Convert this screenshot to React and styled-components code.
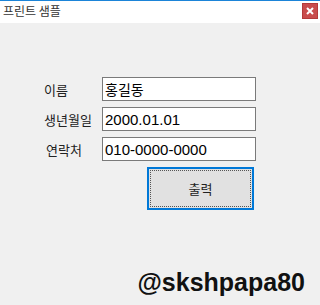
import React from "react";
import styled, { createGlobalStyle } from "styled-components";

const GlobalStyle = createGlobalStyle`
  html, body {
    margin: 0;
    padding: 0;
    background: #f0f0f0;
  }
`;

const Window = styled.div`
  width: 320px;
  height: 305px;
  display: flex;
  flex-direction: column;
  background: #f0f0f0;
  font-family: "Noto Sans CJK KR", "Liberation Sans", sans-serif;
  overflow: hidden;
`;

const TitleBar = styled.div`
  height: 22px;
  border-top: 1px solid #1b84d8;
  background: #fff;
  display: flex;
  align-items: flex-start;
  justify-content: space-between;
`;

const Title = styled.span`
  font-size: 12px;
  color: #333;
  padding: 2px 0 0 3px;
  line-height: 16px;
`;

const CloseButton = styled.div`
  width: 14px;
  height: 14px;
  margin: 2px 2px 0 0;
  background: #c94c4c;
  border: 1px solid #b33a3a;
  display: flex;
  align-items: center;
  justify-content: center;
`;

const Body = styled.div`
  flex: 1;
  display: flex;
  flex-direction: column;
  padding: 54px 0 0 0;
`;

const Form = styled.div`
  display: grid;
  grid-template-columns: 58px 154px;
  row-gap: 6px;
  padding-left: 44px;
`;

const Label = styled.label`
  font-size: 13px;
  color: #222;
  display: flex;
  align-items: center;
  padding-left: ${(p) => p.$indent || 0}px;
`;

const Input = styled.div`
  height: 22px;
  border: 1px solid #7a7a7a;
  background: #fff;
  font-family: "Liberation Sans", "Noto Sans CJK KR", sans-serif;
  font-size: 15px;
  color: #000;
  display: flex;
  align-items: center;
  padding-left: 2px;
  box-sizing: content-box;
`;

const HangulValue = styled.span`
  font-family: "Noto Sans CJK KR", sans-serif;
  font-size: 14px;
`;

const ButtonRow = styled.div`
  display: flex;
  padding: 6px 0 0 147px;
`;

const PrintButton = styled.button`
  width: 107px;
  height: 43px;
  background: #e1e1e1;
  border: 2px solid #0078d7;
  padding: 0;
  font-family: "Noto Sans CJK KR", sans-serif;
  font-size: 13px;
  color: #222;
  position: relative;
  &::after {
    content: "";
    position: absolute;
    inset: 1px;
    border: 1px dotted #555;
  }
`;

const Watermark = styled.div`
  margin-top: auto;
  padding: 0 15px 8px 0;
  text-align: right;
  font-family: "Liberation Sans", sans-serif;
  font-weight: bold;
  font-size: 25px;
  color: #111;
`;

const rows = [
  { label: "이름", value: <HangulValue>홍길동</HangulValue> },
  { label: "생년월일", value: "2000.01.01" },
  { label: "연락처", value: "010-0000-0000", indent: 2 },
];

export default function App() {
  return (
    <>
      <GlobalStyle />
      <Window>
        <TitleBar>
          <Title>프린트 샘플</Title>
          <CloseButton>
            <svg width="8" height="8" viewBox="0 0 8 8">
              <path d="M1 1 L7 7 M7 1 L1 7" stroke="#fff" strokeWidth="2" />
            </svg>
          </CloseButton>
        </TitleBar>
        <Body>
          <Form>
            {rows.map((r) => (
              <React.Fragment key={r.label}>
                <Label $indent={r.indent}>{r.label}</Label>
                <Input>{r.value}</Input>
              </React.Fragment>
            ))}
          </Form>
          <ButtonRow>
            <PrintButton>출력</PrintButton>
          </ButtonRow>
          <Watermark>@skshpapa80</Watermark>
        </Body>
      </Window>
    </>
  );
}
